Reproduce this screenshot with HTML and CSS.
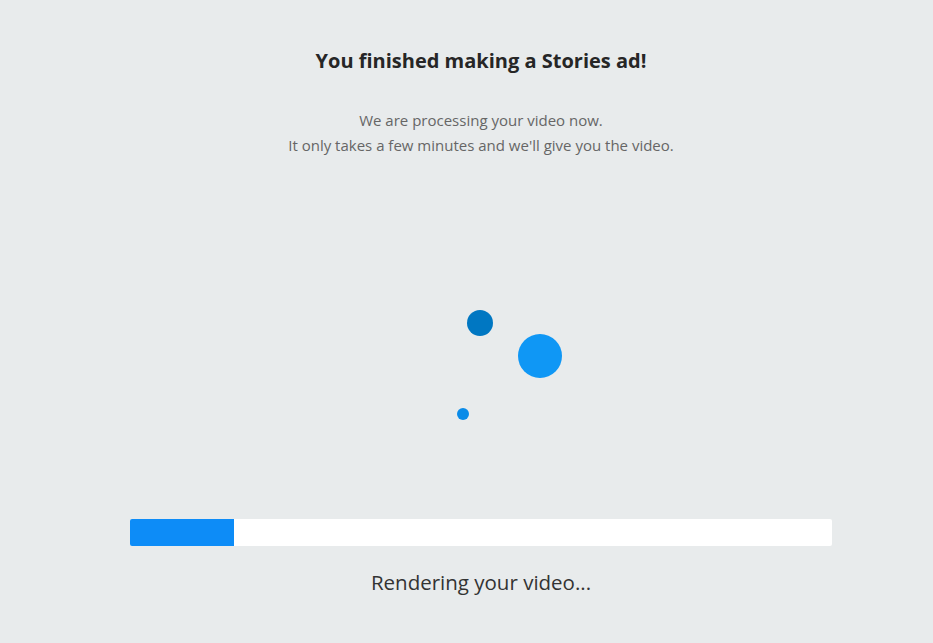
FILE: index.html
```html
<!DOCTYPE html>
<html lang="en">
<head>
    <meta charset="UTF-8">
    <meta name="viewport" content="width=device-width, initial-scale=1.0">
    <title>Stories ad - rendering</title>
    <link rel="stylesheet" href="styles.css">
</head>
<body>
    <div class="page">
        <h1 class="title">You finished making a Stories ad!</h1>
        <p class="note">We are processing your video now.<br>It only takes a few minutes and we'll give you the video.</p>

        <div class="loader">
            <span class="dot dot-dark"></span>
            <span class="dot dot-big"></span>
            <span class="dot dot-small"></span>
        </div>

        <div class="progress">
            <div class="progress-fill" style="width: 104px"></div>
        </div>
        <div class="status">Rendering your video...</div>
    </div>
</body>
</html>
```

FILE: styles.css
```css
body { margin: 0; background: #e8ebec; font-family: "Open Sans", Lato, sans-serif; color: #2b2b2b; }
.page { width: 702px; height: 643px; margin-left: 130px; padding-top: 47px; box-sizing: border-box; text-align: center; }
.title { margin: 0; font-size: 20px; line-height: 28px; font-weight: 700; color: #262626; }
.note { margin: 33px 0 0; font-size: 15px; line-height: 25px; color: #666; }

.loader { position: relative; height: 361px; }
.dot { position: absolute; border-radius: 50%; }
.dot-dark { left: 337px; top: 152px; width: 26px; height: 26px; background: #0077c2; }
.dot-big { left: 388px; top: 176px; width: 44px; height: 44px; background: #0f97f5; }
.dot-small { left: 327px; top: 250px; width: 12px; height: 12px; background: #0a8be8; }

.progress { height: 27px; background: #fff; border-radius: 2px; overflow: hidden; }
.progress-fill { height: 100%; background: #0d8cf7; }
.status { margin-top: 22px; font-size: 20.5px; line-height: 28px; color: #333; }
```
